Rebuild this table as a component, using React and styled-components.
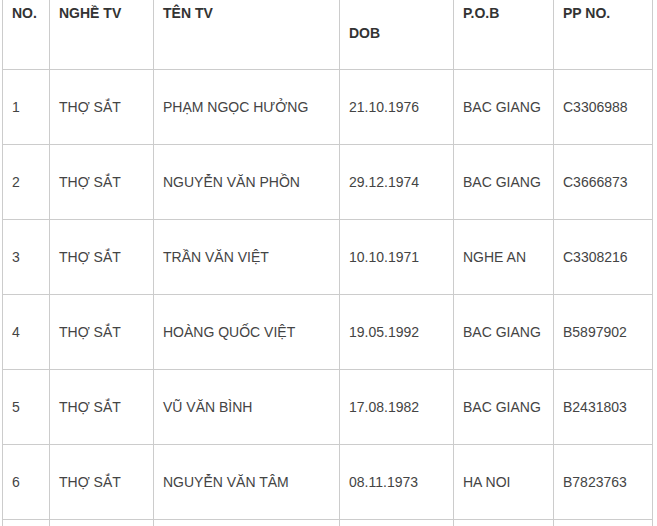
import React from "react";
import styled, { createGlobalStyle } from "styled-components";

const GlobalStyle = createGlobalStyle`
  html, body {
    margin: 0;
    padding: 0;
    background: #fff;
    overflow: hidden;
  }
  body {
    font-family: "Liberation Sans", Arial, sans-serif;
    font-size: 14px;
    color: #333;
  }
`;

const Page = styled.div`
  padding-left: 2px;
`;

const Table = styled.div`
  display: grid;
  grid-template-columns: 47px 104px 186px 114px 100px 99px;
  width: 650px;
  border-right: 1px solid #cccccc;
`;

const HeaderCell = styled.div`
  box-sizing: border-box;
  height: 70px;
  padding: ${(p) => (p.$drop ? "23px" : "3px")} 8px 0 9px;
  border-left: 1px solid #cccccc;
  border-bottom: 1px solid #cccccc;
  font-weight: bold;
  line-height: 20px;
  color: #333;
  white-space: nowrap;
`;

const Cell = styled.div`
  box-sizing: border-box;
  height: 75px;
  padding: 0 8px 0 9px;
  display: flex;
  align-items: center;
  border-left: 1px solid #cccccc;
  border-bottom: 1px solid #cccccc;
  line-height: 20px;
  color: #444;
  white-space: nowrap;
`;

const headers = [
  { label: "NO." },
  { label: "NGHỀ TV" },
  { label: "TÊN TV" },
  { label: "DOB", drop: true },
  { label: "P.O.B" },
  { label: "PP NO." },
];

const rows = [
  ["1", "THỢ SẮT", "PHẠM NGỌC HƯỞNG", "21.10.1976", "BAC GIANG", "C3306988"],
  ["2", "THỢ SẮT", "NGUYỄN VĂN PHỒN", "29.12.1974", "BAC GIANG", "C3666873"],
  ["3", "THỢ SẮT", "TRẦN VĂN VIỆT", "10.10.1971", "NGHE AN", "C3308216"],
  ["4", "THỢ SẮT", "HOÀNG QUỐC VIỆT", "19.05.1992", "BAC GIANG", "B5897902"],
  ["5", "THỢ SẮT", "VŨ VĂN BÌNH", "17.08.1982", "BAC GIANG", "B2431803"],
  ["6", "THỢ SẮT", "NGUYỄN VĂN TÂM", "08.11.1973", "HA NOI", "B7823763"],
  ["", "", "", "", "", ""],
];

const App = () => {
  return (
    <Page>
      <GlobalStyle />
      <Table>
        {headers.map((h) => (
          <HeaderCell key={h.label} $drop={h.drop}>
            {h.label}
          </HeaderCell>
        ))}
        {rows.map((row, i) =>
          row.map((value, j) => <Cell key={i + "-" + j}>{value}</Cell>)
        )}
      </Table>
    </Page>
  );
};

export default App;
